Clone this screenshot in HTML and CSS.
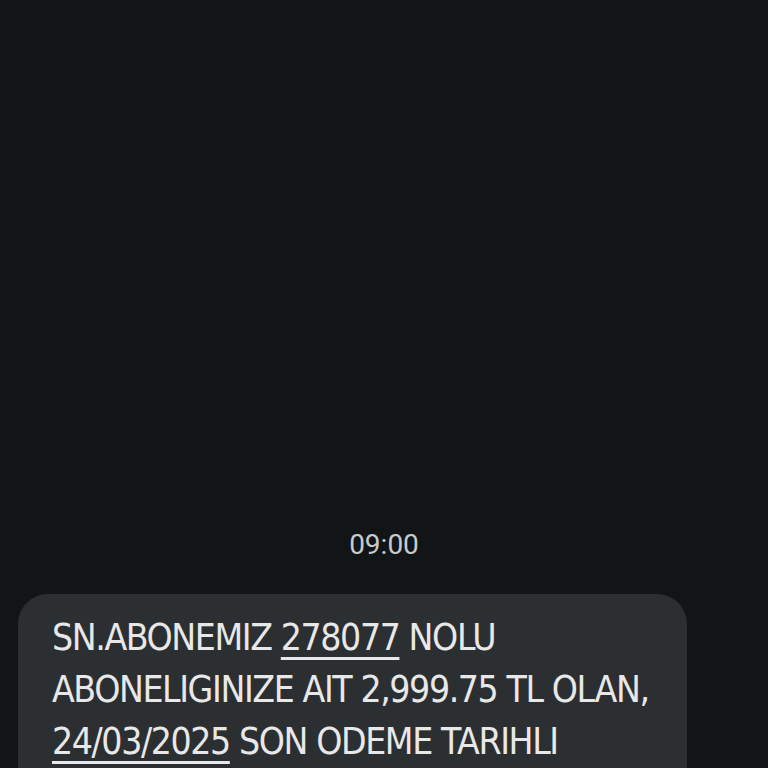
FILE: index.html
```html
<!DOCTYPE html>
<html lang="tr">
<head>
  <meta charset="UTF-8" />
  <meta name="viewport" content="width=device-width, initial-scale=1">
  <title>Mesaj</title>
  <link rel="stylesheet" href="styles.css">
</head>
<body>

  <div class="thread">
    <div class="time">09:00</div>
    <div class="bubble">
      <p class="text">SN.ABONEMIZ <span class="link">278077</span> NOLU<br>ABONELIGINIZE AIT 2,999.75 TL OLAN,<br><span class="link">24/03/2025</span> SON ODEME TARIHLI</p>
    </div>
  </div>

</body>
</html>
```

FILE: styles.css
```css
html, body {
  margin: 0;
  height: 100%;
}

body {
  background: #111518;
  font-family: 'DejaVu Sans Condensed', 'Roboto', sans-serif;
  overflow: hidden;
}

.thread {
  display: flex;
  flex-direction: column;
  height: 100%;
  padding-top: 529px;
  box-sizing: border-box;
}

.time {
  color: #c9cacb;
  font-family: 'Roboto', sans-serif;
  font-size: 28px;
  text-align: center;
  line-height: 32px;
}

.bubble {
  flex: 1;
  background: #2c2f32;
  border-radius: 30px 30px 0 0;
  margin: 33px 0 0 18px;
  width: 669px;
  padding: 18px 30px 0 34px;
  box-sizing: border-box;
}

.text {
  margin: 0;
  color: #e8e8e8;
  font-size: 37px;
  line-height: 52px;
  letter-spacing: -1.4px;
  white-space: nowrap;
}

.link {
  text-decoration: underline;
  text-decoration-thickness: 3px;
  text-underline-offset: 7px;
}
```
